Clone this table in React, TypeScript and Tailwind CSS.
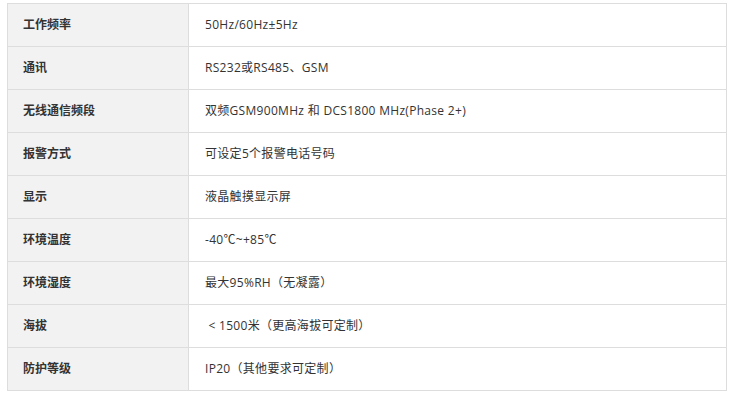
const rows: [string, string][] = [
  ["工作频率", "50Hz/60Hz±5Hz"],
  ["通讯", "RS232或RS485、GSM"],
  ["无线通信频段", "双频GSM900MHz 和 DCS1800 MHz(Phase 2+)"],
  ["报警方式", "可设定5个报警电话号码"],
  ["显示", "液晶触摸显示屏"],
  ["环境温度", "-40℃~+85℃"],
  ["环境湿度", "最大95%RH（无凝露）"],
  ["海拔", " < 1500米（更高海拔可定制）"],
  ["防护等级", "IP20（其他要求可定制）"],
];

export default function App() {
  return (
    <div
      className="w-[736px] h-[401px] bg-white pl-[7px] pt-[3px] text-[12px] text-[#333]"
      style={{ fontFamily: '"Open Sans", "Noto Sans CJK SC", sans-serif' }}
    >
      <div className="w-[720px] border border-[#dddddd]">
        {rows.map(([label, value], i) => (
          <div
            key={label}
            className={`flex ${i < rows.length - 1 ? "h-[43px] border-b border-[#dddddd]" : "h-[42px]"}`}
          >
            <div className="w-[181px] shrink-0 flex items-center pl-[15px] bg-[#f2f2f2] border-r border-[#dddddd] font-bold">
              {label}
            </div>
            <div className="flex-1 flex items-center pl-[16px] whitespace-pre tracking-[0.3px]">
              {value}
            </div>
          </div>
        ))}
      </div>
    </div>
  );
}
